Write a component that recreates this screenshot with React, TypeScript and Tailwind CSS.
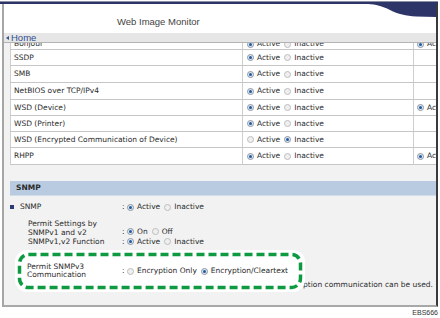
import React from 'react';

type Row = { name: string; h: string; sel: 'a' | 'i'; extra?: boolean };

const rows: Row[] = [
  { name: 'Bonjour', h: 'h-[16px] -mt-[9px] pt-[5px]', sel: 'a', extra: true },
  { name: 'SSDP', h: 'h-[16px]', sel: 'a' },
  { name: 'SMB', h: 'h-[17px]', sel: 'a' },
  { name: 'NetBIOS over TCP/IPv4', h: 'h-[17px]', sel: 'a' },
  { name: 'WSD (Device)', h: 'h-[16px]', sel: 'a', extra: true },
  { name: 'WSD (Printer)', h: 'h-[16px]', sel: 'a' },
  { name: 'WSD (Encrypted Communication of Device)', h: 'h-[16px]', sel: 'i' },
  { name: 'RHPP', h: 'h-[17px]', sel: 'a', extra: true },
];

function Radio({ on }: { on?: boolean }) {
  return (
    <span
      className={`inline-flex w-[7px] h-[7px] shrink-0 items-center justify-center rounded-full border ${
        on ? 'border-[#8c98a6] bg-[#dfe6ee]' : 'border-[#bdbdbd] bg-[#efefef]'
      }`}
    >
      {on && <span className="w-[3px] h-[3px] rounded-full bg-[#1f5aa0]" />}
    </span>
  );
}

function Option({ on, label }: { on?: boolean; label: string }) {
  return (
    <span className="inline-flex items-center mr-[4px] whitespace-nowrap">
      <Radio on={on} />
      <span className="ml-[3px]">{label}</span>
    </span>
  );
}

export default function App() {
  return (
    <div className="w-[440px] h-[318px] bg-white overflow-hidden font-['DejaVu_Sans',sans-serif] text-[7.5px] text-[#2a2a2a]">
      {/* top band */}
      <div className="mt-[1px] w-[438px] h-[1px] bg-[#8d8fa3]" />
      <div className="w-[438px] h-[2px] bg-[#2d3568]" />

      {/* window frame */}
      <div className="ml-[2px] w-[436px] border-l-2 border-l-[#a6a6a6] border-r-2 border-r-[#3a3a3a] border-b-2 border-b-[#a8a8a8] bg-[#f2f2f2]">
        {/* header */}
        <div className="h-[29px] bg-white flex justify-between items-start">
          <div className="pl-[113px] pt-[12px] font-['Liberation_Sans',sans-serif] text-[9.5px] leading-[12px] text-[#444]">
            Web Image Monitor
          </div>
          <svg width="68" height="14" viewBox="0 0 68 14" className="shrink-0">
            <path d="M0 0 L68 0 L68 13 L48 12.5 C38 12 30 10 22 6 C14 2 8 0.5 0 0 Z" fill="#2d3568" />
          </svg>
        </div>

        {/* home bar */}
        <div className="relative z-10 h-[10px] bg-[#e6e6e6] border-b border-b-[#b4b4b4] flex items-center pl-[2px] font-['Liberation_Sans',sans-serif] text-[9.5px] leading-[10px] text-[#2f4f8f]">
          <span className="w-0 h-0 border-y-[2.5px] border-y-transparent border-r-[3px] border-r-[#2f4f8f]" />
          <span className="ml-[2px]">Home</span>
        </div>

        {/* protocol table */}
        <div className="h-[122px] overflow-hidden pl-[6px]">
          {rows.map((r) => (
            <div key={r.name} className={`${r.h} flex bg-white border-b border-b-[#c6c6c6]`}>
              <div className="w-[232px] shrink-0 border-l border-l-[#cfcfcf] pl-[3px] flex items-center whitespace-nowrap">
                {r.name}
              </div>
              <div className="w-[171px] shrink-0 border-l border-l-[#cfcfcf] pl-[4px] flex items-center">
                <Option on={r.sel === 'a'} label="Active" />
                <Option on={r.sel === 'i'} label="Inactive" />
              </div>
              <div className="flex-1 border-l border-l-[#cfcfcf] pl-[3px] flex items-center overflow-hidden">
                {r.extra && <Option on label="Active" />}
              </div>
            </div>
          ))}
        </div>

        <div className="h-[16px]" />

        {/* SNMP section */}
        <div className="ml-[6px] h-[15px] bg-[#b9cbe1] border-b border-b-[#d3dde9] flex items-center pl-[6px] font-bold">
          SNMP
        </div>

        <div className="pl-[6px]">
          <div className="mt-[4px] h-[14px] flex items-center">
            <div className="w-[112px] flex items-center">
              <span className="w-[4px] h-[4px] bg-[#2d3a78]" />
              <span className="ml-[6px]">SNMP</span>
            </div>
            <span className="w-[5px]">:</span>
            <Option on label="Active" />
            <Option label="Inactive" />
          </div>

          <div className="mt-[6px] h-[17px] flex items-center">
            <div className="w-[112px] pl-[18px] leading-[8.5px]">
              Permit Settings by
              <br />
              SNMPv1 and v2
            </div>
            <div className="mt-[6px] flex items-center">
              <span className="w-[5px]">:</span>
              <Option on label="On" />
              <Option label="Off" />
            </div>
          </div>

          <div className="h-[9px] flex items-center">
            <div className="w-[112px] pl-[18px]">SNMPv1,v2 Function</div>
            <span className="w-[5px]">:</span>
            <Option on label="Active" />
            <Option label="Inactive" />
          </div>

          {/* highlighted setting */}
          <div className="relative z-10 mt-[4px] ml-[5px] w-[290px] h-[42px] bg-white rounded-[12px] flex items-center pl-[12px]">
            <svg width="290" height="42" className="absolute inset-0">
              <rect x="4.5" y="4.5" width="281" height="33" rx="9" fill="none" stroke="#0e9a41" strokeWidth="3.5" strokeDasharray="8 4" />
            </svg>
            <div className="w-[95px] leading-[8.5px] relative">
              Permit SNMPv3
              <br />
              Communication
            </div>
            <div className="flex items-center relative">
              <span className="w-[5px]">:</span>
              <Option label="Encryption Only" />
              <Option on label="Encryption/Cleartext" />
            </div>
          </div>

          <div className="-mt-[12px] h-[10px] flex items-center justify-end pr-[3px] whitespace-nowrap">
            Only encryption communication can be used.
          </div>
          <div className="h-[15px]" />
        </div>
      </div>

      <div className="w-[438px] mt-[1px] text-right font-['Liberation_Sans',sans-serif] text-[7px] leading-[9px] text-[#333]">
        EBS666
      </div>
    </div>
  );
}
